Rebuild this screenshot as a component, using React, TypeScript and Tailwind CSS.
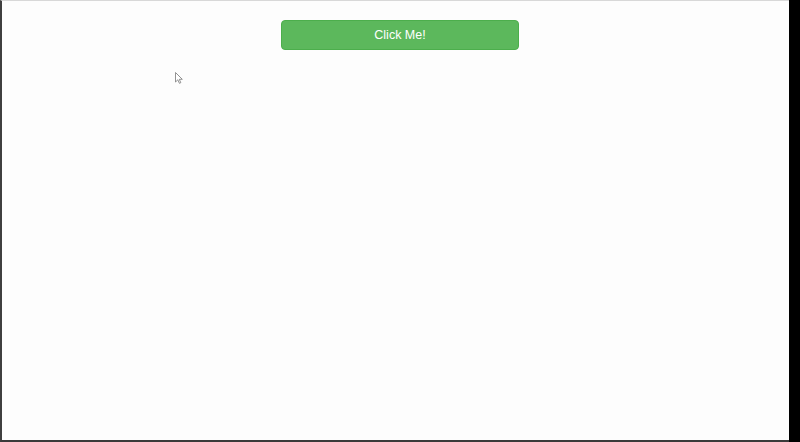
import React from "react";

export default function App() {
  return (
    <div className="w-[800px] h-[442px] bg-black flex" style={{ fontFamily: '"Liberation Sans", Arial, sans-serif' }}>
      <div className="relative w-[789px] h-[442px] bg-[#fdfdfd] border-l-2 border-l-[#3f3f3f] border-b-2 border-b-[#3a3a3a] border-t border-t-[#d8d8d8] flex flex-col items-start pt-[19px] pl-[279px]">
        <button className="w-[238px] h-[30px] rounded-[4px] bg-[#5cb85c] border border-[#4cae4c] text-white text-[12.5px] leading-none">
          Click Me!
        </button>
        <svg className="absolute left-[172px] top-[70px]" width="10" height="14" viewBox="0 0 10 14">
          <path d="M1.5 1.5 L1.5 11 L3.8 8.8 L5.4 12.3 L6.8 11.7 L5.3 8.3 L8.3 8.3 Z" fill="#ffffff" stroke="#777" strokeWidth="0.8" />
        </svg>
      </div>
    </div>
  );
}
